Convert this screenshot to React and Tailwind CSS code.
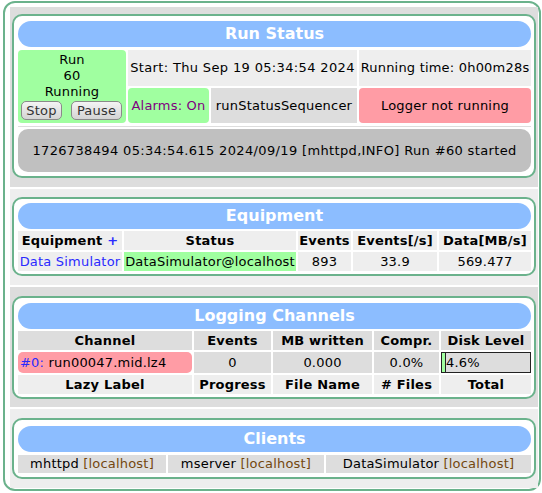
import React from "react";

const font = { fontFamily: '"DejaVu Sans", Verdana, sans-serif' };

function Header({ children }) {
  return (
    <div className="flex h-[26px] items-center justify-center rounded-[13px] bg-[#8cbdff] text-[16px] font-bold tracking-normal text-white">
      {children}
    </div>
  );
}

function Box({ children, className }) {
  return (
    <div className={`mx-[2px] rounded-[10px] border-2 border-[#6bb28c] bg-white pl-[4px] pr-[3px] ${className}`}>
      {children}
    </div>
  );
}

function Btn({ children, w }) {
  return (
    <button className={`flex h-[19px] ${w} items-center justify-center rounded-[5px] border border-[#8a8a8a] bg-gradient-to-b from-[#f4f4f4] to-[#d4d4d4] text-[13px] leading-none text-[#333]`}>
      {children}
    </button>
  );
}

function RunStatus() {
  return (
    <div className="bg-[#dddddd] pt-[7px] pb-[9px]">
      <Box className="pt-[5px] pb-[4px]">
        <Header>Run Status</Header>
        <div className="mt-[3px] grid grid-cols-[108px_81px_146px_172px] grid-rows-[36px_35px] gap-[2px]">
          <div className="row-span-2 flex flex-col items-center rounded-[4px] bg-[#a0ffa0] pt-[2px]">
            <div>Run</div>
            <div>60</div>
            <div>Running</div>
            <div className="mt-px flex w-full justify-between pl-[3px] pr-[4px]">
              <Btn w="w-[41px]">Stop</Btn>
              <Btn w="w-[51px]">Pause</Btn>
            </div>
          </div>
          <div className="col-span-2 flex items-center justify-center bg-[#eeeeee] tracking-[0.35px]">
            Start: Thu Sep 19 05:34:54 2024
          </div>
          <div className="flex items-center justify-center bg-[#eeeeee]">
            Running time: 0h00m28s
          </div>
          <div className="flex items-center justify-center rounded-[4px] bg-[#a0ffa0] text-[#800080]">
            Alarms: On
          </div>
          <div className="flex items-center justify-center bg-[#dddddd]">
            runStatusSequencer
          </div>
          <div className="flex items-center justify-center rounded-[4px] bg-[#ff9ca5]">
            Logger not running
          </div>
        </div>
        <div className="mt-[3px] h-px bg-[#dddddd]" />
        <div className="mt-[2px] flex h-[43px] items-center justify-center rounded-[10px] bg-[#c0c0c0] tracking-[0.35px]">
          1726738494 05:34:54.615 2024/09/19 [mhttpd,INFO] Run #60 started
        </div>
      </Box>
    </div>
  );
}

function Equipment() {
  const head = "flex h-[19px] items-center justify-center bg-[#eeeeee] font-bold";
  const cell = "flex h-[19px] items-center justify-center bg-[#eeeeee]";
  return (
    <div className="bg-[#eeeeee] pt-[8px] pb-[9px]">
      <Box className="pt-[4px] pb-[3px]">
        <Header>Equipment</Header>
        <div className="mt-[2px] grid grid-cols-[104px_172px_53px_84px_92px] gap-[2px]">
          <div className={head}>
            Equipment&nbsp;<span className="text-[#2a2aff]">+</span>
          </div>
          <div className={head}>Status</div>
          <div className={head}>Events</div>
          <div className={head}>Events[/s]</div>
          <div className={head}>Data[MB/s]</div>
          <div className={`${cell} text-[#2a2aff]`}>Data Simulator</div>
          <div className={`${cell} !bg-[#a0ffa0]`}>DataSimulator@localhost</div>
          <div className={cell}>893</div>
          <div className={cell}>33.9</div>
          <div className={cell}>569.477</div>
        </div>
      </Box>
    </div>
  );
}

function Logging() {
  const head = "flex h-[19px] items-center justify-center bg-[#dddddd] font-bold";
  const foot = "flex h-[19px] items-center justify-center bg-[#eeeeee] font-bold";
  const cell = "flex h-[21px] items-center justify-center bg-[#dddddd]";
  return (
    <div className="bg-[#dddddd] pt-[9px] pb-[8px]">
      <Box className="pt-[5px] pb-[3px]">
        <Header>Logging Channels</Header>
        <div className="mt-[2px] grid grid-cols-[174px_77px_99px_65px_90px] gap-[2px]">
          <div className={head}>Channel</div>
          <div className={head}>Events</div>
          <div className={head}>MB written</div>
          <div className={head}>Compr.</div>
          <div className={head}>Disk Level</div>
          <div className="flex h-[21px] items-center rounded-[5px] bg-[#ff9ca5] pl-[2px]">
            <span className="text-[#2a2aff]">#0:</span>&nbsp;run00047.mid.lz4
          </div>
          <div className={cell}>0</div>
          <div className={cell}>0.000</div>
          <div className={cell}>0.0%</div>
          <div className="flex h-[21px] items-stretch border border-[#222] bg-[#dddddd]">
            <div className="w-[4px] border-r border-[#222] bg-[#a0ffa0]" />
            <div className="flex items-center">4.6%</div>
          </div>
          <div className={foot}>Lazy Label</div>
          <div className={foot}>Progress</div>
          <div className={foot}>File Name</div>
          <div className={foot}># Files</div>
          <div className={foot}>Total</div>
        </div>
      </Box>
    </div>
  );
}

function Clients() {
  const cell = "flex h-[18px] items-center justify-center bg-[#dddddd]";
  const host = <span className="text-[#74480f]">[localhost]</span>;
  return (
    <div className="bg-[#eeeeee] pt-[9px] pb-[9px]">
      <Box className="pt-[6px] pb-[4px]">
        <Header>Clients</Header>
        <div className="mt-[3px] grid grid-cols-[148px_156px_205px] gap-[2px]">
          <div className={cell}>mhttpd&nbsp;{host}</div>
          <div className={cell}>mserver&nbsp;{host}</div>
          <div className={cell}>DataSimulator&nbsp;{host}</div>
        </div>
      </Box>
    </div>
  );
}

export default function App() {
  return (
    <div className="h-[493px] w-[542px] overflow-hidden bg-white text-[13px] leading-[16px] tracking-[0.2px] text-black" style={font}>
      <div className="ml-[3px] mt-px w-[538px] rounded-[12px] border-2 border-[#6bb28c] pt-[4px] pl-[5px] pr-px pb-px">
        <div className="flex flex-col gap-[2px]">
          <RunStatus />
          <Equipment />
          <Logging />
          <Clients />
        </div>
      </div>
    </div>
  );
}
